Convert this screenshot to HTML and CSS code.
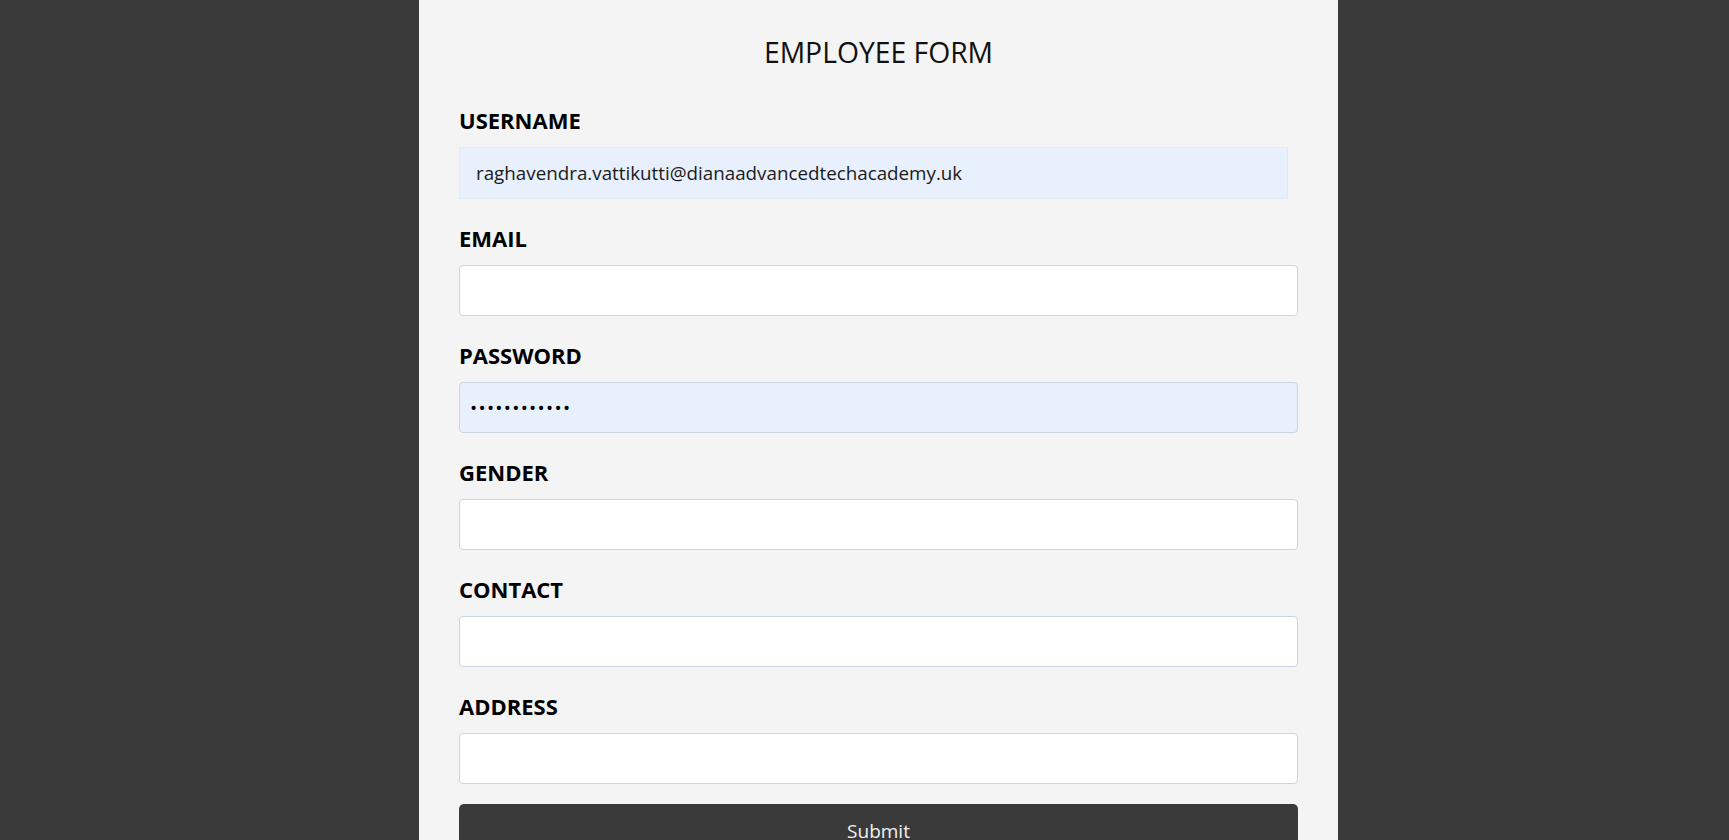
FILE: index.html
```html
<!DOCTYPE html>
<html lang="en">
<head>
<meta charset="utf-8">
<title>Employee Form</title>
<link rel="stylesheet" href="styles.css">
</head>
<body>
<main class="panel">
  <h1 class="title">EMPLOYEE FORM</h1>
  <form class="form">
    <div class="field">
      <label class="label" for="username">USERNAME</label>
      <input class="input input-autofill input-user" id="username" type="text" value="raghavendra.vattikutti@dianaadvancedtechacademy.uk">
    </div>
    <div class="field">
      <label class="label" for="email">EMAIL</label>
      <input class="input" id="email" type="email">
    </div>
    <div class="field">
      <label class="label" for="password">PASSWORD</label>
      <input class="input input-autofill input-pass" id="password" type="password" value="abcdefghijkl">
    </div>
    <div class="field">
      <label class="label" for="gender">GENDER</label>
      <input class="input" id="gender" type="text">
    </div>
    <div class="field">
      <label class="label" for="contact">CONTACT</label>
      <input class="input" id="contact" type="text">
    </div>
    <div class="field">
      <label class="label" for="address">ADDRESS</label>
      <input class="input" id="address" type="text">
    </div>
    <button class="submit" type="button">Submit</button>
  </form>
</main>
</body>
</html>
```
FILE: styles.css
```css
html, body {
  margin: 0;
  padding: 0;
}
body {
  background: #3a3a3a;
  font-family: "Open Sans", "Noto Sans", sans-serif;
  min-height: 100vh;
}
.panel {
  box-sizing: border-box;
  margin-left: 419px;
  width: 919px;
  min-height: 100vh;
  background: #f4f4f4;
  padding: 33px 40px 40px;
}
.title {
  margin: 0 0 30px;
  font-size: 28.3px;
  line-height: 38px;
  font-weight: 400;
  color: #111;
  text-align: center;
}
.form {
  display: flex;
  flex-direction: column;
  gap: 20px;
}
.field {
  display: flex;
  flex-direction: column;
}
.label {
  font-size: 22px;
  line-height: 38px;
  font-weight: 700;
  color: #000;
}
.input {
  box-sizing: border-box;
  margin-top: 8px;
  width: 100%;
  height: 51px;
  border: 1px solid #c9d5e4;
  border-radius: 4px;
  background: #fff;
  padding: 0 12px;
  font-family: "Open Sans", "Noto Sans", sans-serif;
  font-size: 18px;
  color: #1a1a1a;
  outline: none;
}
.input-autofill {
  background: #e8f0fe;
}
.input-user {
  width: 829px;
  height: 52px;
  border-color: #e2e9f3;
  border-radius: 0;
  padding-left: 16px;
  font-size: 18.8px;
}
.input-pass {
  padding-left: 10px;
  font-size: 19px;
  letter-spacing: 1.3px;
  color: #000;
}
.submit {
  box-sizing: border-box;
  width: 100%;
  height: 52px;
  border: none;
  border-radius: 5px;
  background: #3a3a3a;
  color: #f2f2f2;
  font-family: "Open Sans", "Noto Sans", sans-serif;
  font-size: 19px;
  line-height: 26px;
  padding: 14px 0 12px;
  text-align: center;
}
```
